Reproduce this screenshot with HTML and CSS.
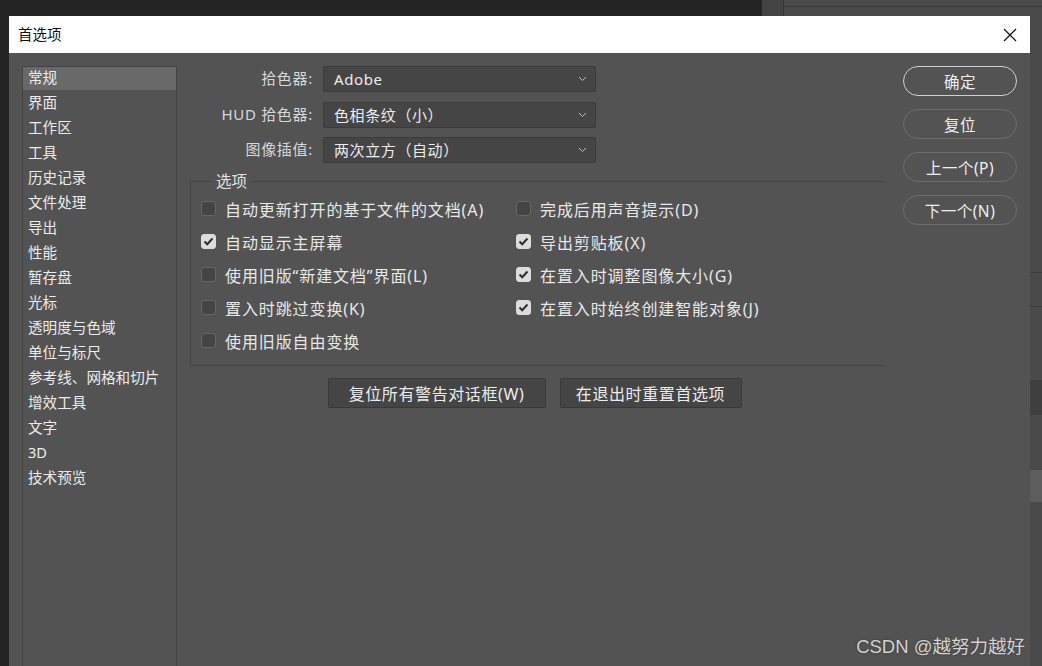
FILE: index.html
```html
<!DOCTYPE html>
<html lang="zh-CN">
<head>
<meta charset="UTF-8">
<title>首选项</title>
<link rel="stylesheet" href="styles.css">
</head>
<body>

<div class="desktop">
  <div class="desktop-dark"></div>
  <div class="desktop-side"></div>
  <div class="desktop-panel">
    <div class="panel-top"></div>
    <div class="panel-row first"></div>
    <div class="panel-row"></div>
    <div class="panel-block dark"></div>
    <div class="panel-block light"></div>
  </div>
</div>

<div class="dialog">
  <div class="titlebar">
    <span class="title">首选项</span>
    <svg class="close" width="14" height="14" viewBox="0 0 14 14">
      <path d="M1 1 L13 13 M13 1 L1 13" stroke="#111" stroke-width="1.2" fill="none"/>
    </svg>
  </div>

  <div class="dialog-body">
    <ul class="sidebar">
      <li class="active">常规</li>
      <li>界面</li>
      <li>工作区</li>
      <li>工具</li>
      <li>历史记录</li>
      <li>文件处理</li>
      <li>导出</li>
      <li>性能</li>
      <li>暂存盘</li>
      <li>光标</li>
      <li>透明度与色域</li>
      <li>单位与标尺</li>
      <li>参考线、网格和切片</li>
      <li>增效工具</li>
      <li>文字</li>
      <li>3D</li>
      <li>技术预览</li>
    </ul>

    <div class="main">
      <div class="form-grid">
        <label>拾色器:</label>
        <div class="select">Adobe <svg class="chev" width="9" height="6" viewBox="0 0 9 6"><path d="M1 1 L4.5 4.5 L8 1" stroke="#bdbdbd" fill="none"/></svg></div>
        <label>HUD 拾色器:</label>
        <div class="select">色相条纹（小） <svg class="chev" width="9" height="6" viewBox="0 0 9 6"><path d="M1 1 L4.5 4.5 L8 1" stroke="#bdbdbd" fill="none"/></svg></div>
        <label>图像插值:</label>
        <div class="select">两次立方（自动） <svg class="chev" width="9" height="6" viewBox="0 0 9 6"><path d="M1 1 L4.5 4.5 L8 1" stroke="#bdbdbd" fill="none"/></svg></div>
      </div>

      <fieldset class="options">
        <legend>选项</legend>
        <div class="check-grid">
          <div class="check"><span class="box"></span>自动更新打开的基于文件的文档(A)</div>
          <div class="check"><span class="box"></span>完成后用声音提示(D)</div>
          <div class="check"><span class="box on"><svg width="11" height="9" viewBox="0 0 11 9"><path d="M1.5 4.5 L4.2 7.2 L9.5 1.5" stroke="#2e2e2e" stroke-width="2" fill="none"/></svg></span>自动显示主屏幕</div>
          <div class="check"><span class="box on"><svg width="11" height="9" viewBox="0 0 11 9"><path d="M1.5 4.5 L4.2 7.2 L9.5 1.5" stroke="#2e2e2e" stroke-width="2" fill="none"/></svg></span>导出剪贴板(X)</div>
          <div class="check"><span class="box"></span>使用旧版“新建文档”界面(L)</div>
          <div class="check"><span class="box on"><svg width="11" height="9" viewBox="0 0 11 9"><path d="M1.5 4.5 L4.2 7.2 L9.5 1.5" stroke="#2e2e2e" stroke-width="2" fill="none"/></svg></span>在置入时调整图像大小(G)</div>
          <div class="check"><span class="box"></span>置入时跳过变换(K)</div>
          <div class="check"><span class="box on"><svg width="11" height="9" viewBox="0 0 11 9"><path d="M1.5 4.5 L4.2 7.2 L9.5 1.5" stroke="#2e2e2e" stroke-width="2" fill="none"/></svg></span>在置入时始终创建智能对象(J)</div>
          <div class="check"><span class="box"></span>使用旧版自由变换</div>
        </div>
      </fieldset>

      <div class="reset-row">
        <button class="flat-btn reset-warn">复位所有警告对话框(W)</button>
        <button class="flat-btn reset-prefs">在退出时重置首选项</button>
      </div>
    </div>

    <div class="actions">
      <button class="pill default">确定</button>
      <button class="pill">复位</button>
      <button class="pill">上一个(P)</button>
      <button class="pill">下一个(N)</button>
    </div>
  </div>
</div>

<div class="watermark">CSDN @越努力越好</div>

</body>
</html>
```

FILE: styles.css
```css
body {
  margin: 0;
  width: 1042px;
  height: 666px;
  overflow: hidden;
  position: relative;
  background-color: #252525;
  font-family: "Noto Sans", "Noto Sans CJK SC", sans-serif;
}

/* tlo aplikacji pod oknem */
.desktop {
  display: flex;
  height: 666px;
}

.desktop-dark {
  flex: 0 0 762px;
  background-color: #242424;
}

.desktop-side {
  flex: 0 0 21px;
  background-color: #434343;
  border-right: 1px solid #363636;
}

.desktop-panel {
  flex: 1;
  background-color: #4a4a4a;
  display: flex;
  flex-direction: column;
}

.panel-top {
  height: 6px;
  border-bottom: 1px solid #3a3a3a;
  margin-bottom: 230px;
}

.panel-row {
  height: 33px;
  border-bottom: 1px solid #3e3e3e;
}

.panel-row.first {
  height: 35px;
}

.panel-block {
  height: 35px;
  margin-top: 73px;
}

.panel-block.dark {
  background-color: #3f3f3f;
}

.panel-block.light {
  background-color: #5d5d5d;
  margin-top: 55px;
  height: 32px;
}

/* okno dialogu */
.dialog {
  position: absolute;
  left: 9px;
  top: 16px;
  width: 1021px;
  height: 680px;
  background-color: #535353;
  display: flex;
  flex-direction: column;
}

.titlebar {
  height: 37px;
  background-color: #fff;
  display: flex;
  align-items: center;
  justify-content: space-between;
  padding: 0 13px 0 9px;
}

.title {
  font-family: "Noto Sans CJK SC", sans-serif;
  font-size: 14.5px;
  color: #111;
  margin-top: -2px;
}

.dialog-body {
  flex: 1;
  display: flex;
  padding: 13px 13px 0 13px;
}

.sidebar {
  list-style: none;
  margin: 0;
  padding: 0;
  width: 153px;
  border: 1px solid #434343;
  border-bottom: none;
}

.sidebar li {
  height: 23px;
  line-height: 21px;
  margin-bottom: 2px;
  padding-left: 5px;
  font-size: 14.6px;
  color: #ececec;
}

.sidebar li.active {
  background-color: #696969;
}

.main {
  width: 694px;
  margin-left: 13px;
  display: flex;
  flex-direction: column;
}

.form-grid {
  display: grid;
  grid-template-columns: 123px 273px;
  grid-auto-rows: 26px;
  column-gap: 10px;
  row-gap: 9.5px;
}

.form-grid label {
  text-align: right;
  line-height: 25px;
  font-size: 15px;
  letter-spacing: 0.7px;
  color: #d8d8d8;
}

.select {
  box-sizing: border-box;
  background-color: #454545;
  border: 1px solid #3b3b3b;
  border-radius: 2px;
  padding: 0 8px 0 10px;
  display: flex;
  align-items: center;
  justify-content: space-between;
  font-size: 15px;
  letter-spacing: 0.6px;
  line-height: 22px;
  color: #ececec;
}

.options {
  margin: 8px 0 0 0;
  padding: 1px 0 8px 0;
  border: 1px solid #434343;
  border-right: none;
}

.options legend {
  margin-left: 20px;
  padding: 0 5px;
  font-size: 15.5px;
  line-height: 20px;
  color: #e2e2e2;
}

.check-grid {
  display: grid;
  grid-template-columns: 315px auto;
  grid-auto-rows: 33px;
  padding-left: 10px;
}

.check {
  display: flex;
  align-items: center;
  font-size: 16px;
  letter-spacing: 0.9px;
  color: #e8e8e8;
  white-space: nowrap;
}

.box {
  box-sizing: border-box;
  width: 15px;
  height: 15px;
  margin-right: 9px;
  border: 1px solid #666;
  border-radius: 3px;
  background-color: #454545;
  display: flex;
  align-items: center;
  justify-content: center;
}

.box.on {
  background-color: #dcdcdc;
  border-color: #dcdcdc;
}

.reset-row {
  display: flex;
  justify-content: center;
  gap: 14px;
  margin-top: 12px;
  padding-right: 5px;
}

.flat-btn {
  height: 30px;
  padding: 0;
  background-color: #454545;
  border: 1px solid #393939;
  border-radius: 2px;
  font-family: "Noto Sans", "Noto Sans CJK SC", sans-serif;
  font-size: 16px;
  letter-spacing: 0.6px;
  color: #ececec;
}

.reset-warn {
  width: 218px;
}

.reset-prefs {
  width: 182px;
}

.actions {
  width: 114px;
  margin-left: 19px;
  display: flex;
  flex-direction: column;
  gap: 13px;
}

.pill {
  height: 30px;
  background: none;
  border: 1.5px solid #6d6d6d;
  border-radius: 15px;
  font-family: "Noto Sans", "Noto Sans CJK SC", sans-serif;
  font-size: 15.5px;
  letter-spacing: 0.5px;
  color: #eeeeee;
}

.pill.default {
  border-color: #cfcfcf;
}

.watermark {
  position: absolute;
  right: 17px;
  bottom: 8px;
  font-family: "Liberation Sans", "Noto Sans CJK SC", sans-serif;
  font-size: 18.5px;
  color: #d2d2d2;
  text-shadow: 0 0 2px #333;
}
```
